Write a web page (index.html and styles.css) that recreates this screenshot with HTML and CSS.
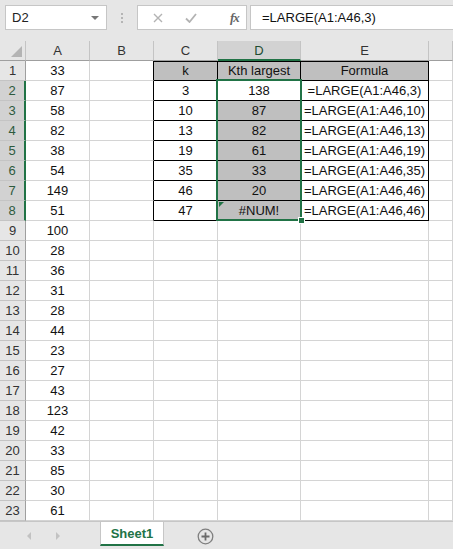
FILE: index.html
```html
<!DOCTYPE html>
<html lang="en">
<head>
  <meta charset="UTF-8">
  <title>LARGE function</title>
  <link rel="stylesheet" href="styles.css">
</head>
<body>
  <div class="app">
    <div class="formula-bar">
      <div class="name-box"><span>D2</span><span class="caret"></span></div>
      <div class="grip"><i></i><i></i><i></i></div>
      <div class="fx-buttons">
        <svg width="10" height="10" viewBox="0 0 10 10"><path d="M1 1L9 9M9 1L1 9" stroke="#b3b3b3" stroke-width="1.4" fill="none"/></svg>
        <svg width="12" height="10" viewBox="0 0 12 10"><path d="M1 5.5L4.5 9L11 1" stroke="#b3b3b3" stroke-width="1.8" fill="none"/></svg>
        <span class="fx">fx</span>
      </div>
      <div class="formula-input">=LARGE(A1:A46,3)</div>
    </div>

    <div class="sheet-wrap">
      <div class="sheet">
        <div class="c h corner"><span class="tri"></span></div>
        <div class="c h">A</div><div class="c h">B</div><div class="c h">C</div><div class="c h sel">D</div><div class="c h">E</div><div class="c h"></div>

        <div class="c r">1</div><div class="c">33</div><div class="c bl"></div><div class="c t th top">k</div><div class="c t th top">Kth largest</div><div class="c t th top">Formula</div><div class="c"></div>
        <div class="c r sel">2</div><div class="c">87</div><div class="c bl"></div><div class="c t">3</div><div class="c t">138</div><div class="c t">=LARGE(A1:A46,3)</div><div class="c"></div>
        <div class="c r sel">3</div><div class="c">58</div><div class="c bl"></div><div class="c t">10</div><div class="c t g">87</div><div class="c t">=LARGE(A1:A46,10)</div><div class="c"></div>
        <div class="c r sel">4</div><div class="c">82</div><div class="c bl"></div><div class="c t">13</div><div class="c t g">82</div><div class="c t">=LARGE(A1:A46,13)</div><div class="c"></div>
        <div class="c r sel">5</div><div class="c">38</div><div class="c bl"></div><div class="c t">19</div><div class="c t g">61</div><div class="c t">=LARGE(A1:A46,19)</div><div class="c"></div>
        <div class="c r sel">6</div><div class="c">54</div><div class="c bl"></div><div class="c t">35</div><div class="c t g">33</div><div class="c t">=LARGE(A1:A46,35)</div><div class="c"></div>
        <div class="c r sel">7</div><div class="c">149</div><div class="c bl"></div><div class="c t">46</div><div class="c t g">20</div><div class="c t">=LARGE(A1:A46,46)</div><div class="c"></div>
        <div class="c r sel">8</div><div class="c">51</div><div class="c bl"></div><div class="c t">47</div><div class="c t g err">#NUM!</div><div class="c t">=LARGE(A1:A46,46)</div><div class="c"></div>
        <div class="c r">9</div><div class="c">100</div><div class="c"></div><div class="c"></div><div class="c"></div><div class="c"></div><div class="c"></div>
        <div class="c r">10</div><div class="c">28</div><div class="c"></div><div class="c"></div><div class="c"></div><div class="c"></div><div class="c"></div>
        <div class="c r">11</div><div class="c">36</div><div class="c"></div><div class="c"></div><div class="c"></div><div class="c"></div><div class="c"></div>
        <div class="c r">12</div><div class="c">31</div><div class="c"></div><div class="c"></div><div class="c"></div><div class="c"></div><div class="c"></div>
        <div class="c r">13</div><div class="c">28</div><div class="c"></div><div class="c"></div><div class="c"></div><div class="c"></div><div class="c"></div>
        <div class="c r">14</div><div class="c">44</div><div class="c"></div><div class="c"></div><div class="c"></div><div class="c"></div><div class="c"></div>
        <div class="c r">15</div><div class="c">23</div><div class="c"></div><div class="c"></div><div class="c"></div><div class="c"></div><div class="c"></div>
        <div class="c r">16</div><div class="c">27</div><div class="c"></div><div class="c"></div><div class="c"></div><div class="c"></div><div class="c"></div>
        <div class="c r">17</div><div class="c">43</div><div class="c"></div><div class="c"></div><div class="c"></div><div class="c"></div><div class="c"></div>
        <div class="c r">18</div><div class="c">123</div><div class="c"></div><div class="c"></div><div class="c"></div><div class="c"></div><div class="c"></div>
        <div class="c r">19</div><div class="c">42</div><div class="c"></div><div class="c"></div><div class="c"></div><div class="c"></div><div class="c"></div>
        <div class="c r">20</div><div class="c">33</div><div class="c"></div><div class="c"></div><div class="c"></div><div class="c"></div><div class="c"></div>
        <div class="c r">21</div><div class="c">85</div><div class="c"></div><div class="c"></div><div class="c"></div><div class="c"></div><div class="c"></div>
        <div class="c r">22</div><div class="c">30</div><div class="c"></div><div class="c"></div><div class="c"></div><div class="c"></div><div class="c"></div>
        <div class="c r">23</div><div class="c">61</div><div class="c"></div><div class="c"></div><div class="c"></div><div class="c"></div><div class="c"></div>
      </div>
      <div class="selection"><span class="handle"></span></div>
    </div>

    <div class="tabs">
      <div class="nav"><span class="arrow left"></span><span class="arrow right"></span></div>
      <div class="tab">Sheet1</div>
      <div class="add">
        <svg width="17" height="17" viewBox="0 0 17 17"><circle cx="8.5" cy="8.5" r="7.3" stroke="#7f7f7f" stroke-width="1.3" fill="none"/><path d="M8.5 4.5V12.5M4.5 8.5H12.5" stroke="#6a6a6a" stroke-width="1.8"/></svg>
      </div>
    </div>
  </div>
</body>
</html>
```

FILE: styles.css
```css
body {
  margin: 0;
  font-family: 'Liberation Sans', Arial, sans-serif;
  background: #fff;
}
.app {
  width: 453px;
  height: 549px;
  overflow: hidden;
  display: flex;
  flex-direction: column;
}

/* formula bar */
.formula-bar {
  height: 41px;
  box-sizing: border-box;
  background: #e6e6e6;
  padding: 5px 0 0 5px;
  display: flex;
  align-items: flex-start;
}
.name-box {
  width: 102px;
  height: 25px;
  box-sizing: border-box;
  background: #fff;
  border: 1px solid #c6c6c6;
  display: flex;
  align-items: center;
  justify-content: space-between;
  padding: 0 7px 0 6px;
  font-size: 13px;
  color: #222;
}
.caret {
  width: 0;
  height: 0;
  border-left: 4px solid transparent;
  border-right: 4px solid transparent;
  border-top: 4px solid #777;
}
.grip {
  width: 30px;
  height: 25px;
  display: flex;
  flex-direction: column;
  align-items: center;
  justify-content: center;
  gap: 2px;
}
.grip i {
  width: 2px;
  height: 2px;
  background: #b5b5b5;
}
.fx-buttons {
  width: 110px;
  height: 25px;
  box-sizing: border-box;
  background: #fff;
  border: 1px solid #c6c6c6;
  display: flex;
  align-items: center;
  padding: 0 0 0 15px;
  gap: 22px;
}
.fx {
  font-family: 'Liberation Serif', serif;
  font-style: italic;
  font-weight: bold;
  font-size: 13px;
  color: #666;
  margin-left: 11px;
  letter-spacing: -1px;
}
.formula-input {
  flex: 1;
  height: 25px;
  box-sizing: border-box;
  margin-left: 3px;
  background: #fff;
  border: 1px solid #c6c6c6;
  border-right: none;
  padding-left: 11px;
  display: flex;
  align-items: center;
  font-size: 13px;
  color: #111;
}

/* grid */
.sheet-wrap {
  position: relative;
}
.sheet {
  display: grid;
  grid-template-columns: 26px 64px 64px 64px 83px 128px 1fr;
  grid-auto-rows: 20px;
  font-size: 13px;
  color: #111;
}
.c {
  box-sizing: border-box;
  border-right: 1px solid #d4d4d4;
  border-bottom: 1px solid #d4d4d4;
  display: flex;
  align-items: center;
  justify-content: center;
  white-space: nowrap;
  overflow: hidden;
}
.h {
  background: #e6e6e6;
  color: #333;
  border-right-color: #c4c4c4;
  border-bottom-color: #9f9f9f;
}
.h.sel {
  background: #d2d2d2;
  border-bottom: 2px solid #217346;
  color: #1e4d32;
}
.corner {
  justify-content: flex-end;
  align-items: flex-end;
  padding: 0 3px 3px 0;
}
.tri {
  width: 0;
  height: 0;
  border-left: 11px solid transparent;
  border-bottom: 11px solid #b4b4b4;
}
.r {
  background: #e6e6e6;
  color: #333;
  border-right-color: #9f9f9f;
  border-bottom-color: #c4c4c4;
}
.r.sel {
  background: #d2d2d2;
  color: #2d5a3d;
  border-right: 2px solid #217346;
}
.bl {
  border-right-color: #000;
}
.t {
  border-right-color: #000;
  border-bottom-color: #000;
}
.top {
  box-shadow: inset 0 1px 0 #000;
}
.th,
.g {
  background: #bfbfbf;
}
.err {
  position: relative;
}
.err::before {
  content: "";
  position: absolute;
  left: 1px;
  top: 1px;
  border-top: 5px solid #217346;
  border-right: 5px solid transparent;
}

/* selection */
.selection {
  position: absolute;
  left: 216px;
  top: 38px;
  width: 86px;
  height: 142px;
  box-sizing: border-box;
  border: 2px solid #217346;
}
.handle {
  position: absolute;
  right: -5px;
  bottom: -5px;
  width: 5px;
  height: 5px;
  background: #217346;
  border: 1px solid #fff;
}

/* sheet tabs */
.tabs {
  flex: 1;
  background: #e6e6e6;
  border-top: 1px solid #c6c6c6;
  display: flex;
  align-items: flex-start;
}
.nav {
  width: 100px;
  height: 27px;
  display: flex;
  align-items: center;
  padding-left: 27px;
  box-sizing: border-box;
  gap: 25px;
}
.arrow {
  width: 0;
  height: 0;
  border-top: 4px solid transparent;
  border-bottom: 4px solid transparent;
}
.arrow.left {
  border-right: 4px solid #c2c2c2;
}
.arrow.right {
  border-left: 4px solid #c2c2c2;
}
.tab {
  width: 64px;
  height: 24px;
  box-sizing: border-box;
  background: #fff;
  border-left: 1px solid #c6c6c6;
  border-right: 1px solid #c6c6c6;
  border-bottom: 2px solid #217346;
  color: #217346;
  font-weight: bold;
  font-size: 13px;
  display: flex;
  align-items: center;
  justify-content: center;
}
.add {
  margin-left: 33px;
  margin-top: 6px;
  display: flex;
}
```
